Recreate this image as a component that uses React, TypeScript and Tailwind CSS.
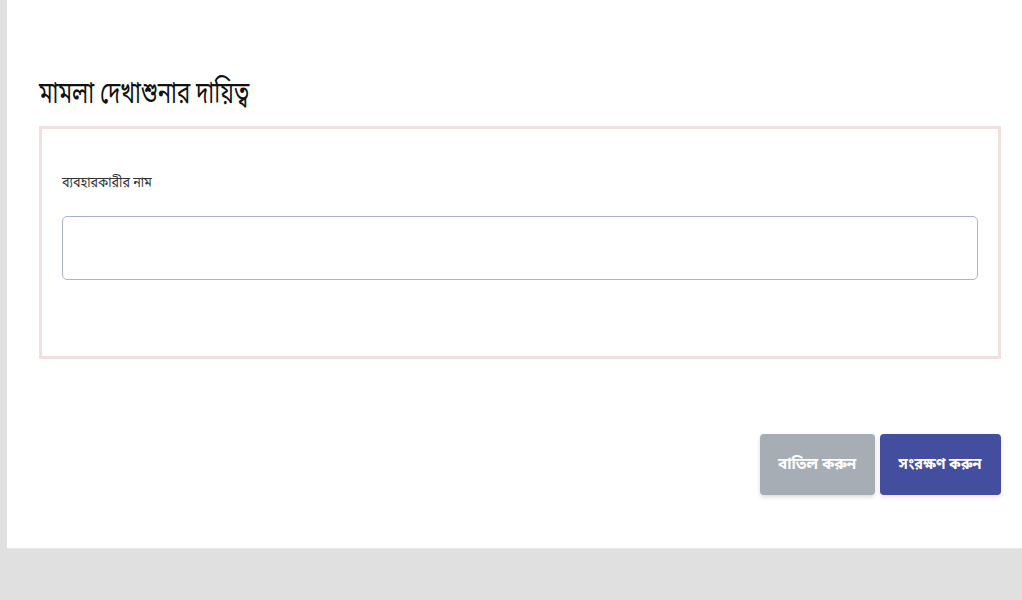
import React from "react";

export default function App() {
  return (
    <div
      className="w-[1022px] h-[600px] bg-[#e0e0e0] flex flex-col overflow-hidden"
      style={{ fontFamily: '"Noto Sans Bengali", "Noto Sans", "Liberation Sans", sans-serif' }}
    >
      <div className="ml-[7px] h-[549px] bg-white border-b border-[#e6e6e6] flex flex-col pl-[32px] pr-[21px]">
        <h1 className="mt-[74px] h-[52px] text-[30px] leading-[42px] text-[#111]">
          <span className="inline-block origin-left scale-x-[0.74]">মামলা দেখাশুনার দায়িত্ব</span>
        </h1>
        <div className="border-[3px] border-[#f0e0e0] h-[233px] flex flex-col px-[20px]">
          <label className="mt-[42px] text-[15px] leading-[24px] text-[#333]">
            <span className="inline-block origin-left scale-x-[0.84]">ব্যবহারকারীর নাম</span>
          </label>
          <input
            type="text"
            className="mt-[21px] h-[64px] w-full rounded-[5px] border border-[#aab0d6] outline-none px-3"
          />
        </div>
        <div className="mt-[75px] flex justify-end gap-[5px]">
          <button className="w-[115px] h-[61px] rounded-[4px] bg-[#a6adb4] text-white font-bold text-[16px] shadow-[0_2px_4px_rgba(0,0,0,0.15)]">
            <span className="inline-block scale-x-[0.95]">বাতিল করুন</span>
          </button>
          <button className="w-[121px] h-[61px] rounded-[4px] bg-[#434f9e] text-white font-bold text-[16px] shadow-[0_2px_4px_rgba(200,0,60,0.15)]">
            <span className="inline-block scale-x-[0.9]">সংরক্ষণ করুন</span>
          </button>
        </div>
      </div>
    </div>
  );
}
